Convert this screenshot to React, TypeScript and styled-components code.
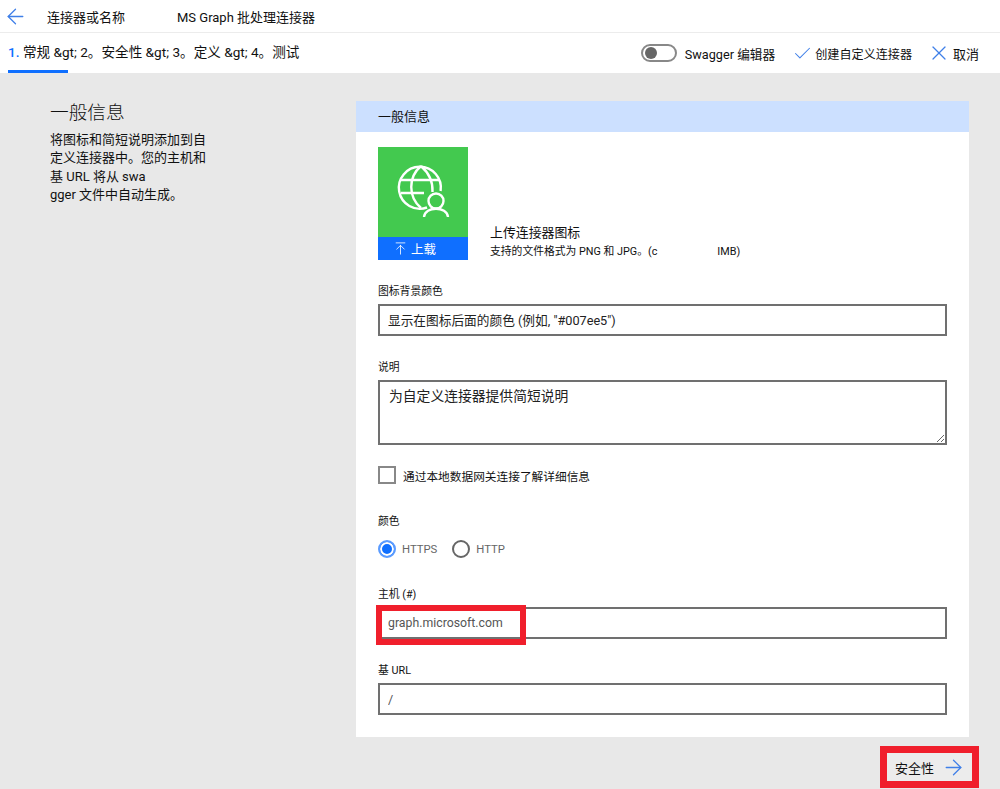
import React from "react";
import styled, { createGlobalStyle } from "styled-components";
import { ArrowLeft, ArrowRight, ArrowUpToLine, Check, X } from "lucide-react";

const GlobalStyle = createGlobalStyle`
  html, body {
    margin: 0;
    padding: 0;
    height: 100%;
    background: #e8e8e8;
  }
  body {
    font-family: Roboto, "Noto Sans CJK SC", sans-serif;
    color: #111;
    overflow: hidden;
  }
`;

const App = () => {
  return (
    <Page>
      <GlobalStyle />
      <TitleBar>
        <BackIcon size={25} strokeWidth={1.2} />
        <NameLabel>连接器或名称</NameLabel>
        <NameValue>MS Graph 批处理连接器</NameValue>
      </TitleBar>
      <StepBar>
        <StepTab>
          <StepNum>1.</StepNum> 常规 &amp;gt; 2。安全性 &amp;gt; 3。定义 &amp;gt; 4。测试
        </StepTab>
        <Actions>
          <Toggle />
          <SwaggerLabel>Swagger 编辑器</SwaggerLabel>
          <ActionButton>
            <Check size={21} strokeWidth={1.2} color="#3f7fe8" />
            创建自定义连接器
          </ActionButton>
          <CancelButton>
            <X size={24} strokeWidth={1.2} color="#3f7fe8" />
            取消
          </CancelButton>
        </Actions>
      </StepBar>
      <Content>
        <Intro>
          <IntroTitle>一般信息</IntroTitle>
          <IntroText>
            将图标和简短说明添加到自
            <br />
            定义连接器中。您的主机和
            <br />
            基 URL 将从 swa
            <br />
            gger 文件中自动生成。
          </IntroText>
        </Intro>
        <Column>
          <Card>
            <CardHeader>一般信息</CardHeader>
            <CardBody>
              <IconRow>
                <IconTile>
                  <IconArt>
                    <svg width="90" height="90" viewBox="0 0 90 90" fill="none" stroke="#fff" strokeWidth="2.4">
                      <path d="M49 60.5A21 21 0 1 1 62.6 44" />
                      <path d="M43 19C30 30 30 50 43 61M43 19C52 27 55 36 54.5 45" />
                      <path d="M23 33H61M23 46H46" />
                      <circle cx="58" cy="54" r="7.5" />
                      <path d="M46 70C47 59 69 59 70 70" />
                    </svg>
                  </IconArt>
                  <UploadStrip>
                    <ArrowUpToLine size={15} strokeWidth={1.3} />
                    上载
                  </UploadStrip>
                </IconTile>
                <IconHint>
                  <HintTitle>上传连接器图标</HintTitle>
                  <HintText>
                    支持的文件格式为 PNG 和 JPG。(c<HintGap />IMB)
                  </HintText>
                </IconHint>
              </IconRow>

              <FieldLabel $top={24}>图标背景颜色</FieldLabel>
              <TextInput readOnly placeholder={'显示在图标后面的颜色 (例如, "#007ee5")'} />

              <FieldLabel $top={24}>说明</FieldLabel>
              <TextArea readOnly placeholder="为自定义连接器提供简短说明" />

              <CheckRow>
                <CheckBox />
                通过本地数据网关连接了解详细信息
              </CheckRow>

              <FieldLabel $top={30}>颜色</FieldLabel>
              <RadioRow>
                <RadioDot $on />
                <RadioText>HTTPS</RadioText>
                <RadioDot />
                <RadioText>HTTP</RadioText>
              </RadioRow>

              <FieldLabel $top={29}>主机 (#)</FieldLabel>
              <HostWrap>
                <HostInput readOnly defaultValue="graph.microsoft.com" />
                <HostMark />
              </HostWrap>

              <FieldLabel $top={24}>基 URL</FieldLabel>
              <TextInput readOnly defaultValue="/" />
            </CardBody>
          </Card>
          <Footer>
            <NextButton>
              安全性
              <ArrowRight size={25} strokeWidth={1.2} color="#3f7fe8" />
            </NextButton>
          </Footer>
        </Column>
      </Content>
    </Page>
  );
};

const Page = styled.div`
  width: 1000px;
  height: 789px;
  display: flex;
  flex-direction: column;
  overflow: hidden;
`;

const TitleBar = styled.header`
  height: 32px;
  display: flex;
  align-items: center;
  padding-left: 3px;
  background: #fff;
  border-bottom: 1px solid #ececec;
  font-size: 13px;
  flex: none;
`;

const BackIcon = styled(ArrowLeft)`
  color: #3f7fe8;
`;

const NameLabel = styled.span`
  margin-left: 19px;
  width: 130px;
`;

const NameValue = styled.span`
  font-size: 13px;
`;

const StepBar = styled.nav`
  height: 40px;
  display: flex;
  align-items: stretch;
  justify-content: space-between;
  padding: 0 21px 0 8px;
  background: #fff;
  flex: none;
`;

const StepTab = styled.div`
  position: relative;
  font-size: 13.6px;
  line-height: 38px;
  white-space: pre;

  &::after {
    content: "";
    position: absolute;
    left: 0;
    bottom: 0;
    width: 60px;
    height: 3px;
    background: #0f6fff;
  }
`;

const StepNum = styled.span`
  color: #0f6fff;
  font-weight: 500;
`;

const Actions = styled.div`
  display: flex;
  align-items: center;
`;

const Toggle = styled.span`
  position: relative;
  width: 36px;
  height: 18px;
  box-sizing: border-box;
  border: 2px solid #888;
  border-radius: 9px;
  margin-right: 8px;

  &::after {
    content: "";
    position: absolute;
    left: 2px;
    top: 1px;
    width: 12px;
    height: 12px;
    border-radius: 50%;
    background: #666;
  }
`;

const SwaggerLabel = styled.span`
  font-size: 12.7px;
  margin-right: 17px;
`;

const ActionButton = styled.span`
  display: flex;
  align-items: center;
  gap: 2px;
  font-size: 12.1px;
`;

const CancelButton = styled.span`
  display: flex;
  align-items: center;
  gap: 2px;
  font-size: 13px;
  margin-left: 15px;
`;

const Content = styled.main`
  flex: 1;
  display: flex;
  background: #e8e8e8;
  padding: 28px 31px 0 50px;
  min-height: 0;
`;

const Intro = styled.aside`
  width: 306px;
  flex: none;
`;

const IntroTitle = styled.h1`
  margin: 0;
  font-size: 18.7px;
  font-weight: 300;
  line-height: 24px;
`;

const IntroText = styled.p`
  margin: 6px 0 0;
  font-size: 13px;
  line-height: 18.4px;
`;

const Column = styled.div`
  flex: 1;
  display: flex;
  flex-direction: column;
`;

const Card = styled.section`
  height: 636px;
  background: #fff;
  flex: none;
`;

const CardHeader = styled.h2`
  margin: 0;
  height: 31px;
  padding-left: 22px;
  background: #cce0ff;
  font-size: 13px;
  font-weight: 400;
  line-height: 31px;
`;

const CardBody = styled.div`
  padding: 15px 22px 0;
`;

const IconRow = styled.div`
  display: flex;
  align-items: flex-end;
`;

const IconTile = styled.div`
  width: 90px;
  height: 113px;
  display: flex;
  flex-direction: column;
`;

const IconArt = styled.div`
  height: 90px;
  background: #43c94f;
`;

const UploadStrip = styled.div`
  flex: 1;
  display: flex;
  align-items: center;
  justify-content: center;
  gap: 3px;
  padding-right: 17px;
  background: #0f6fff;
  color: #fff;
  font-size: 12.5px;
`;

const IconHint = styled.div`
  margin-left: 22px;
`;

const HintTitle = styled.div`
  font-size: 12.9px;
  line-height: 18px;
  margin-bottom: 3px;
`;

const HintText = styled.div`
  font-size: 10.8px;
  line-height: 14px;
  margin-bottom: 1px;
  white-space: nowrap;
`;

const HintGap = styled.span`
  display: inline-block;
  width: 60px;
`;

const FieldLabel = styled.label<{ $top: number }>`
  display: block;
  margin-top: ${(p) => p.$top}px;
  font-size: 10.8px;
  line-height: 15px;
  margin-bottom: 5px;
`;

const TextInput = styled.input`
  display: block;
  width: 100%;
  height: 32px;
  box-sizing: border-box;
  border: 2px solid #707070;
  padding: 0 8px;
  background: #fff;
  font: inherit;
  font-size: 12.7px;
  color: #555;
  outline: none;

  &::placeholder {
    color: #222;
    opacity: 1;
  }
`;

const HostInput = styled(TextInput)`
  font-size: 12.3px;
`;

const TextArea = styled.textarea`
  display: block;
  width: 100%;
  height: 65px;
  box-sizing: border-box;
  border: 2px solid #707070;
  padding: 3px 9px;
  font: inherit;
  font-size: 13.8px;
  line-height: 22px;
  outline: none;

  &::placeholder {
    color: #222;
    opacity: 1;
  }
`;

const CheckRow = styled.div`
  display: flex;
  align-items: center;
  gap: 7px;
  margin-top: 21px;
  font-size: 11.7px;
`;

const CheckBox = styled.span`
  width: 18px;
  height: 18px;
  box-sizing: border-box;
  border: 2px solid #888;
`;

const RadioRow = styled.div`
  display: flex;
  align-items: center;
  margin-top: 11px;
  height: 18px;
`;

const RadioDot = styled.span<{ $on?: boolean }>`
  width: 18px;
  height: 18px;
  box-sizing: border-box;
  border-radius: 50%;
  border: 2px solid ${(p) => (p.$on ? "#5a9bff" : "#666")};
  background: ${(p) => (p.$on ? "#0f6fff" : "#fff")};
  box-shadow: ${(p) => (p.$on ? "inset 0 0 0 2px #fff" : "none")};
  margin-right: 6px;
`;

const RadioText = styled.span`
  font-size: 11.3px;
  color: #666;
  margin-right: 15px;
`;

const HostWrap = styled.div`
  position: relative;
`;

const HostMark = styled.span`
  position: absolute;
  left: -2px;
  top: -2px;
  width: 150px;
  height: 40px;
  box-sizing: border-box;
  border: 6px solid #f01f2c;
  pointer-events: none;
`;

const Footer = styled.div`
  display: flex;
  justify-content: flex-end;
  margin: 9px -10px 0 0;
`;

const NextButton = styled.button`
  width: 99px;
  height: 42px;
  box-sizing: border-box;
  display: flex;
  align-items: center;
  gap: 7px;
  padding: 0 0 0 8px;
  border: 7px solid #f01f2c;
  background: #ececec;
  font: inherit;
  font-size: 13px;
  color: #111;
`;

export default App;
